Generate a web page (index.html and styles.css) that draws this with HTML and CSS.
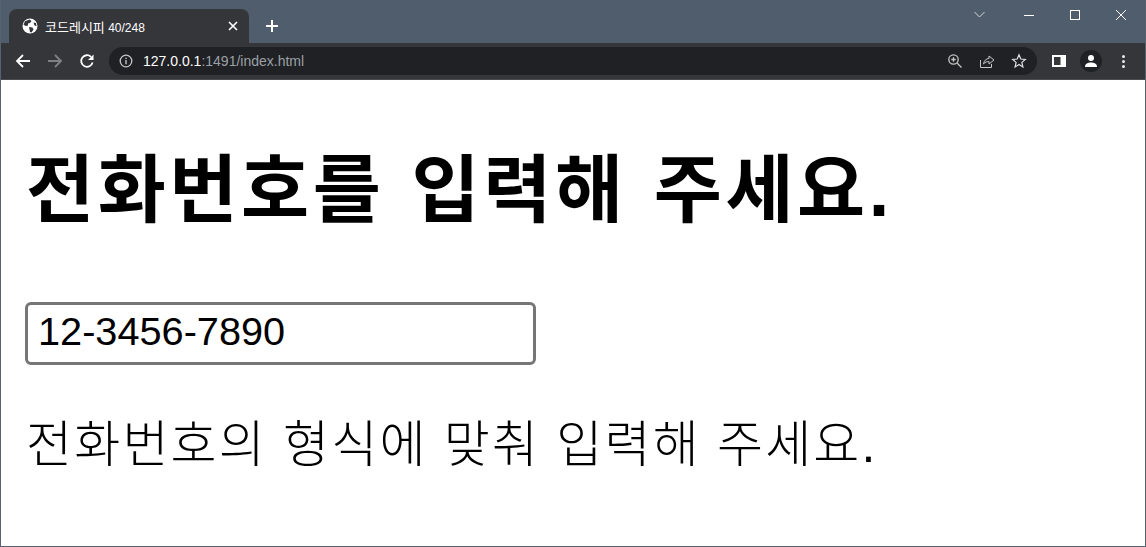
FILE: index.html
```html
<!DOCTYPE html>
<html lang="ko">
<head>
    <meta charset="UTF-8">
    <title>코드레시피 40/248</title>
    <link rel="stylesheet" href="styles.css">
</head>
<body>
    <div class="window">
        <div class="tab-strip">
            <div class="tab">
                <svg class="favicon" width="16" height="16" viewBox="0 0 16 16">
                    <circle cx="8" cy="8" r="7.5" fill="#fff"/>
                    <path d="M3 3.2 L7.5 1.5 L9.5 3 L8 5 L6 5.5 L6 7.5 L3.5 8 L1.5 6.5Z M7 9 L10.5 9.5 L11.5 11.5 L9.5 14.5 L8 14 L7.5 11.5Z M11.5 4.5 L14 5 L14.5 8 L12.5 7.5Z" fill="#35363a"/>
                </svg>
                <span class="tab-title"><span class="tab-title-ko">코드레시피</span> 40/248</span>
                <svg class="tab-close" width="10" height="10" viewBox="0 0 10 10">
                    <path d="M1 1 L9 9 M9 1 L1 9" stroke="#fff" stroke-width="1.6"/>
                </svg>
            </div>
            <svg class="new-tab" width="14" height="14" viewBox="0 0 14 14">
                <path d="M7 1 V13 M1 7 H13" stroke="#fff" stroke-width="2"/>
            </svg>
            <div class="window-controls">
                <svg width="14" height="10" viewBox="0 0 14 10"><path d="M1.5 2 L6.5 7 L11.5 2" fill="none" stroke="#d5d9de" stroke-width="1"/></svg>
                <svg width="12" height="12" viewBox="0 0 12 12"><path d="M1 6.5 H11" stroke="#fff" stroke-width="1"/></svg>
                <svg width="12" height="12" viewBox="0 0 12 12"><rect x="1.5" y="1.5" width="9" height="9" fill="none" stroke="#fff" stroke-width="1"/></svg>
                <svg width="12" height="12" viewBox="0 0 12 12"><path d="M1 1 L11 11 M11 1 L1 11" stroke="#fff" stroke-width="1"/></svg>
            </div>
        </div>

        <div class="toolbar">
            <svg class="nav-icon" width="16" height="16" viewBox="0 0 16 16"><path d="M15 8 H2 M8 2 L2 8 L8 14" fill="none" stroke="#fff" stroke-width="1.8"/></svg>
            <svg class="nav-icon" width="16" height="16" viewBox="0 0 16 16"><path d="M1 8 H14 M8 2 L14 8 L8 14" fill="none" stroke="#7e8083" stroke-width="1.8"/></svg>
            <svg class="nav-icon" width="16" height="16" viewBox="0 0 16 16"><path d="M13.6 9.5 A5.8 5.8 0 1 1 12 3.8" fill="none" stroke="#fff" stroke-width="1.8"/><path d="M14.5 1.5 V7 H9Z" fill="#fff"/></svg>
            <div class="omnibox">
                <svg class="info-icon" width="14" height="14" viewBox="0 0 14 14"><circle cx="7" cy="7" r="5.8" fill="none" stroke="#c4c7c5" stroke-width="1.3"/><path d="M7 6 V10.2 M7 3.7 V5" stroke="#c4c7c5" stroke-width="1.4"/></svg>
                <div class="url"><span class="url-host">127.0.0.1</span>:1491/index.html</div>
                <div class="omnibox-actions">
                    <svg width="16" height="16" viewBox="0 0 16 16"><circle cx="6.5" cy="6.5" r="4.7" fill="none" stroke="#c4c7c5" stroke-width="1.3"/><path d="M10 10 L14.5 14.5 M4.3 6.5 H8.7 M6.5 4.3 V8.7" stroke="#c4c7c5" stroke-width="1.3"/></svg>
                    <svg width="16" height="16" viewBox="0 0 16 16"><path d="M1.5 7 V14.5 H12.5 V11 M4.5 11 C5 7.5 7.5 5.5 10 5.5 V3 L15 7 L10 11 V8.5 C8 8.5 6 9.2 4.5 11Z" fill="none" stroke="#c4c7c5" stroke-width="1"/></svg>
                    <svg width="16" height="16" viewBox="0 0 16 16"><path d="M8 1.8 L9.8 6 L14.3 6.4 L10.9 9.4 L11.9 13.9 L8 11.5 L4.1 13.9 L5.1 9.4 L1.7 6.4 L6.2 6Z" fill="none" stroke="#dfe1e4" stroke-width="1.2"/></svg>
                </div>
            </div>
            <svg class="side-panel" width="14" height="12" viewBox="0 0 14 12"><path d="M0 0 H14 V12 H0Z" fill="#fff"/><rect x="2" y="2" width="6.5" height="8" fill="#35363a"/></svg>
            <div class="avatar">
                <svg width="14" height="14" viewBox="0 0 14 14"><circle cx="7" cy="4" r="3" fill="#fff"/><path d="M1 13 C1 9.5 4 8.5 7 8.5 C10 8.5 13 9.5 13 13Z" fill="#fff"/></svg>
            </div>
            <div class="menu-dots"><i></i><i></i><i></i></div>
        </div>

        <main class="page">
            <h1>전화번호를 입력해 주세요.</h1>
            <input class="phone-input" type="text" value="12-3456-7890">
            <p>전화번호의 형식에 맞춰 입력해 주세요.</p>
        </main>
    </div>
</body>
</html>
```

FILE: styles.css
```css
* {
    margin: 0;
    padding: 0;
    box-sizing: border-box;
}

html, body {
    height: 100%;
    overflow: hidden;
}

body {
    background: #fff;
    font-family: "Liberation Sans", "Noto Sans CJK KR", sans-serif;
}

.window {
    height: 100%;
    display: flex;
    flex-direction: column;
    border: 1px solid #56626f;
    border-top: none;
}

.tab-strip {
    height: 43px;
    flex: none;
    display: flex;
    align-items: flex-end;
    padding-left: 8px;
    background: #505d6c;
}

.tab {
    width: 240px;
    height: 34px;
    display: flex;
    align-items: center;
    padding: 0 11px 0 13px;
    background: #35363a;
    border-radius: 8px 8px 0 0;
}

.favicon {
    flex: none;
}

.tab-title {
    flex: 1;
    margin-left: 7px;
    font-size: 12px;
    color: #fff;
    white-space: nowrap;
}

.tab-title-ko {
    font-size: 13px;
}

.new-tab {
    margin: 0 0 10px 16px;
}

.window-controls {
    align-self: flex-start;
    margin-left: auto;
    display: flex;
    align-items: center;
    gap: 34px;
    height: 30px;
    padding-right: 18px;
}

.window-controls svg:first-child {
    margin-right: 2px;
}

.toolbar {
    height: 37px;
    flex: none;
    display: flex;
    align-items: center;
    padding-left: 14px;
    background: #35363a;
    border-bottom: 1px solid #494c50;
}

.nav-icon {
    margin-right: 16px;
    flex: none;
}

.omnibox {
    width: 928px;
    height: 28px;
    display: flex;
    align-items: center;
    margin-left: -2px;
    padding: 0 10px;
    background: #202124;
    border-radius: 14px;
}

.info-icon {
    flex: none;
}

.url {
    margin-left: 10px;
    font-size: 14px;
    color: #9aa0a6;
}

.url-host {
    color: #fff;
}

.omnibox-actions {
    margin-left: auto;
    display: flex;
    gap: 16px;
}

.side-panel {
    margin-left: 15px;
    flex: none;
}

.avatar {
    width: 22px;
    height: 22px;
    margin-left: 14px;
    display: flex;
    align-items: center;
    justify-content: center;
    background: #202124;
    border-radius: 50%;
}

.menu-dots {
    margin-left: 20px;
    display: flex;
    flex-direction: column;
    gap: 2px;
}

.menu-dots i {
    width: 3px;
    height: 3px;
    background: #e8eaed;
    border-radius: 50%;
}

.page {
    flex: 1;
    padding: 0 24px 0 25px;
    color: #000;
}

h1 {
    margin-top: 65px;
    font-size: 74px;
    font-weight: 700;
    letter-spacing: 3.6px;
    word-spacing: 3px;
    line-height: 92px;
}

.phone-input {
    display: block;
    width: 511px;
    height: 63px;
    margin: 65px 0 0 -1px;
    padding: 0 10px 5px;
    border: 3px solid #767676;
    border-radius: 6px;
    font-family: inherit;
    font-size: 39.7px;
    color: #000;
}

p {
    margin-top: 48px;
    font-size: 50px;
    font-weight: 300;
    letter-spacing: 2.2px;
    line-height: 64px;
}
```
